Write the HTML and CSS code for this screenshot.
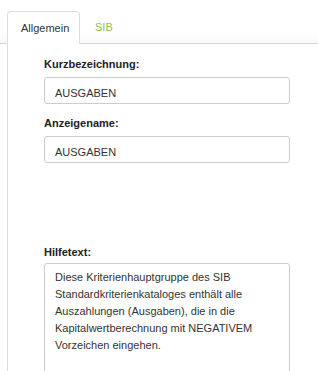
FILE: index.html
```html
<!DOCTYPE html>
<html lang="de">
<head>
  <meta charset="UTF-8">
  <title>Kriterium bearbeiten</title>
  <link rel="stylesheet" href="styles.css">
</head>
<body>
  <div class="tabs">
    <div class="tab active">Allgemein</div>
    <div class="tab">SIB</div>
  </div>

  <div class="panel">
    <div class="field">
      <label for="shortName">Kurzbezeichnung:</label>
      <input type="text" id="shortName" value="AUSGABEN">
    </div>

    <div class="field">
      <label for="displayName">Anzeigename:</label>
      <input type="text" id="displayName" value="AUSGABEN">
    </div>

    <div class="field help">
      <label for="helpText">Hilfetext:</label>
      <textarea id="helpText">Diese Kriterienhauptgruppe des SIB Standardkriterienkataloges enthält alle Auszahlungen (Ausgaben), die in die Kapitalwertberechnung mit NEGATIVEM Vorzeichen eingehen.</textarea>
    </div>
  </div>
</body>
</html>
```

FILE: styles.css
```css
* {
  box-sizing: border-box;
  margin: 0;
  padding: 0;
}

html, body {
  height: 100%;
  overflow: hidden;
}

body {
  font-family: "Liberation Sans", Arial, sans-serif;
  font-size: 11px;
  color: #333;
  background: #fff;
}

.tabs {
  display: flex;
  height: 44px;
  padding: 11px 0 0 7px;
  border-bottom: 1px solid #d4d4d4;
  background: linear-gradient(to bottom, #fff 75%, #f8f8f8);
}

.tab {
  height: 33px;
  padding: 1px 13px 0;
  line-height: 31px;
  color: #8cc152;
  margin-left: 2px;
}

.tab.active {
  width: 73px;
  margin-left: 0;
  margin-bottom: -1px;
  color: #333;
  background: #fff;
  border: 1px solid #ddd;
  border-bottom: none;
  border-radius: 4px 4px 0 0;
}

.panel {
  border-left: 1px solid #ddd;
  margin-left: 7px;
  padding: 13px 0 0 36px;
  height: calc(100% - 44px);
  overflow: hidden;
}

.field {
  width: 246px;
  margin-bottom: 12px;
}

.field label {
  display: block;
  font-weight: bold;
  line-height: 14px;
  color: #222;
  margin-bottom: 6px;
}

.field input,
.field textarea {
  display: block;
  width: 100%;
  font-family: inherit;
  font-size: 11px;
  color: #333;
  border: 1px solid #ccc;
  border-radius: 3px;
  background: #fff;
}

.field input {
  height: 27px;
  padding: 5px 10px 0;
}

.field textarea {
  height: 140px;
  padding: 5px 10px;
  line-height: 17px;
  resize: none;
}

.field.help {
  margin-top: 82px;
}

.field.help label {
  margin-bottom: 4px;
}
```
